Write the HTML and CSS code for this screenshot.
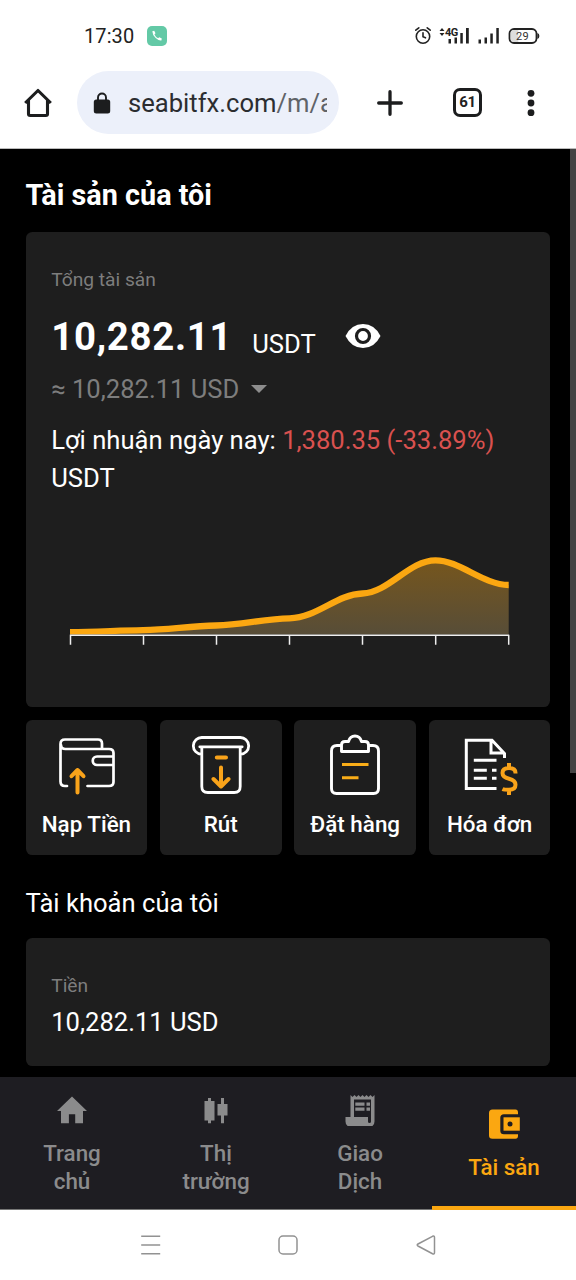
FILE: index.html
```html
<!DOCTYPE html>
<html lang="vi">
<head>
<meta charset="utf-8">
<title>Tài sản của tôi</title>
<link rel="stylesheet" href="styles.css">
</head>
<body>
<div class="screen">
  <header class="chrome">
    <div class="status">
      <span class="clock">17:30</span>
      <svg class="call" width="20" height="20" viewBox="0 0 20 20"><rect width="20" height="20" rx="5" fill="#63c9a6"/><path d="M5.300 5.200l1.900-.5 1.300 2.500-1.100 1.200q1.200 2.500 3.700 3.900l1.200-1.100 2.500 1.200-.4 2.100q-2.400.4-5.700-2.600T5.300 5.200z" fill="#fff"/></svg>
      <svg class="signals" width="128" height="20" viewBox="0 0 128 20">
        <g fill="none" stroke="#222" stroke-width="1.600" stroke-linecap="round"><circle cx="9" cy="10.500" r="6.700"/><path d="M9 6.800v4l2.500 1M1.800 4.200l3-2.400M16.200 4.200l-3-2.400"/></g>
        <g fill="#222"><path d="M25.500 5l2.500-3 2.500 3zM25.500 7l2.500 3 2.500-3z"/><text x="31" y="9.500" class="net">4G</text>
        <path d="M34.500 13h2.500v4.500h-2.500zM40.500 11.500h2.500v6h-2.500zM46.300 7h2.500v10.500h-2.500zM52 2h2.800v15.500H52zM64.500 13.500h2.500v4h-2.500zM70.500 11.500h2.500v6h-2.500zM76.300 7.500h2.500v10h-2.500zM82.300 2h2.500v15.500h-2.500z"/></g>
        <rect x="95.500" y="3" width="27" height="14" rx="4.500" fill="#fff" stroke="#222" stroke-width="1.800"/><path d="M96.800 7q0-3 3-3h4.500v12h-4.500q-3 0-3-3z" fill="#ddd"/><path d="M123.400 7q2 .5 2 3t-2 3z" fill="#222"/><text x="108.500" y="13.800" text-anchor="middle" class="charge">29</text>
      </svg>
    </div>
    <div class="toolbar">
      <svg class="home" width="30" height="30" viewBox="0 0 30 30"><path d="M2.200 15L15 2.500 27.800 15M5.500 12.500v13.300q0 1.700 1.700 1.700h15.600q1.700 0 1.700-1.700V12.500" fill="none" stroke="#1c1d1e" stroke-width="3.100" stroke-linejoin="round"/></svg>
      <div class="address">
        <svg width="18" height="22" viewBox="0 0 18 22"><rect x=".8" y="7.500" width="16.400" height="14" rx="2.500" fill="#1c1d1e"/><path d="M5 9V5.500a4 4 0 0 1 8 0V9" fill="none" stroke="#1c1d1e" stroke-width="1.900"/></svg>
        <span class="url">seabitfx.com<i>/m/a</i></span>
      </div>
      <svg class="plus" width="26" height="26" viewBox="0 0 26 26"><path d="M13 1.700v22.600M1.700 13h22.600" stroke="#1c1d1e" stroke-width="3.300" stroke-linecap="round"/></svg>
      <span class="tabs">61</span>
      <svg class="more" width="8" height="28" viewBox="0 0 8 28" fill="#1c1d1e"><circle cx="4" cy="4.300" r="3.400"/><circle cx="4" cy="14" r="3.400"/><circle cx="4" cy="23.700" r="3.400"/></svg>
    </div>
  </header>

  <main class="page">
    <h1>Tài sản của tôi</h1>
    <section class="card total">
      <div class="label">Tổng tài sản</div>
      <div class="balance">
        <strong>10,282.11</strong><span class="unit">USDT</span>
        <svg class="eye" width="36" height="26" viewBox="0 0 36 26"><path d="M.5 13Q6.500 1 18 1t17.500 12Q29.500 25 18 25T.5 13z" fill="#fff"/><circle cx="18" cy="13" r="6.500" fill="#fff" stroke="#1e1e1e" stroke-width="3.200"/></svg>
      </div>
      <div class="approx"><span>≈ 10,282.11 USD</span><svg width="16" height="8" viewBox="0 0 16 8"><path d="M0 0h16L8 8z" fill="#8d8d8d"/></svg></div>
      <p class="profit">Lợi nhuận ngày nay: <span>1,380.35 (-33.89%)</span> USDT</p>
      <svg class="chart" width="441" height="94" viewBox="69 552 441 94">
        <defs>
          <linearGradient id="area" x1="0" y1="0" x2="0" y2="1"><stop offset="0" stop-color="#76561d"/><stop offset="1" stop-color="#574d38"/></linearGradient>
          <clipPath id="plot"><path d="M70 552h438.700v82.500H70z"/></clipPath>
        </defs>
        <g clip-path="url(#plot)">
          <path d="M70 632.200C96 632 118 630.600 143 630.200C170 629.500 190 626 216 625.500C242 625 264 618.700 289.500 618.300C318 617.500 336 594.500 362.500 593.500C389 592.500 409 560.300 435.500 560.300C460 560.300 482 584.500 509 585V635H70z" fill="url(#area)"/>
          <path d="M70 632.200C96 632 118 630.600 143 630.200C170 629.500 190 626 216 625.500C242 625 264 618.700 289.500 618.300C318 617.500 336 594.500 362.500 593.500C389 592.500 409 560.300 435.500 560.300C460 560.300 482 584.500 509 585" fill="none" stroke="#fba711" stroke-width="6.300"/>
        </g>
        <path d="M69.800 635.300h439.400M70.500 635v9.700M143.500 635v9.700M216.500 635v9.700M289.500 635v9.700M362.500 635v9.700M435.700 635v9.700M508.700 635v9.700" stroke="#eee" stroke-width="1.500"/>
      </svg>
    </section>

    <section class="actions">
      <div class="action">
        <svg width="60" height="62" viewBox="0 0 60 62" fill="none" stroke="#fff" stroke-width="2.700" stroke-linejoin="round" stroke-linecap="round"><path d="M11 52H9q-4.500 0-4.500-4.500V10q0-4.500 4.500-4.500h33q4 0 4 4v5M5 11q0 4 4.500 4H53q4.500 0 4.500 4v29q0 4-4.500 4H31.500M57 22.500H41a4.200 4.200 0 0 0 0 8.500H57"/><path d="M21.500 58.500V36M15.500 42.200l6-6.200 6 6.200" stroke="#f9a31a" stroke-width="4"/></svg>
        <span>Nạp Tiền</span>
      </div>
      <div class="action">
        <svg width="60" height="62" viewBox="0 0 60 62" fill="none" stroke="#fff" stroke-width="2.800" stroke-linejoin="round" stroke-linecap="round"><path d="M10.500 20.300a8.400 8.400 0 0 1 .5-16.800h38a8.400 8.400 0 0 1 .5 16.800M8.800 12.800h42.400M10.800 13v39.500q0 6 6 6h26.400q6 0 6-6V13"/><path d="M25.800 23.500h9.200M30 33.500V52M22.500 45l7.500 7.500 7.500-7.500" stroke="#f9a31a" stroke-width="4"/></svg>
        <span>Rút</span>
      </div>
      <div class="action">
        <svg width="60" height="62" viewBox="0 0 60 62" fill="none" stroke="#fff" stroke-width="2.900" stroke-linejoin="round"><path d="M16 11.500h-4q-5.500 0-5.500 5.500v37.500q0 5 5 5h37q5 0 5-5V17q0-5.500-5.500-5.500h-4M16.500 17.500V11q0-3.500 3.500-3.500h3.500q1.500-5.500 6.500-5.500t6.500 5.500H40q3.500 0 3.500 3.500v6.500z"/><path d="M17 30.500h26.500M17 43.700h16.500" stroke="#f9ad18"/></svg>
        <span>Đặt hàng</span>
      </div>
      <div class="action">
        <svg width="60" height="62" viewBox="2 1.500 60 62" fill="none" stroke="#fff" stroke-width="3"><path d="M38.500 56H8.300V7.700H34l12.500 13.300v4.500M33 8v12.500h13M15.800 27.800h22.700M15.800 37.700h13M34 37.700h4.500M15.800 45.700h13M34 45.700h4.500"/><path d="M57.500 41v-.5q0-5-6.500-5t-6.500 5q0 4.200 6.500 5.700t6.500 6q0 5-6.500 5-5 0-6.500-.7M51 30.500v5M51 56v6.500" stroke="#f9a31a" stroke-width="4"/></svg>
        <span>Hóa đơn</span>
      </div>
    </section>

    <h2>Tài khoản của tôi</h2>
    <section class="card account">
      <div class="label">Tiền</div>
      <div class="amount">10,282.11 USD</div>
    </section>
    <div class="scrollbar"></div>
  </main>

  <nav class="tabbar">
    <a class="tab"><svg width="32" height="32" viewBox="0 0 32 32" fill="#8b8b8c"><path d="M16 2.500L31 17h-4v12.300h-7.800v-9h-6.300v9H5V17H1z"/></svg><span>Trang chủ</span></a>
    <a class="tab"><svg width="32" height="32" viewBox="0 0 32 32" fill="#8b8b8c"><path d="M8 4h3v3h3.500v19.500H11v2.800H8v-2.800H4.500V7H8zM21 4h3v6h3.500v11.500H24v7.800h-3v-7.800h-3.500V10H21z"/></svg><span>Thị trường</span></a>
    <a class="tab"><svg width="32" height="32" viewBox="0 0 32 32"><path d="M6.500 1l2 2 2-2 2 2 2-2 2 2 2-2 2 2 2-2 2 2 2-2 2 2 2-2v26.500q0 5.200-5.200 5.200H6.800q-5.300 0-5.300-5.200V23h5zM10 5.500V23h14v4.500q0 1.500 1.500 1.500t1.500-1.500v-22z" fill="#8b8b8c" fill-rule="evenodd"/><path d="M11.300 8.500h9.200v3.200h-9.200zM22.500 8.500H26v3.200h-3.500zM11.300 13.500h9.200v3.200h-9.200zM22.500 13.500H26v3.200h-3.500z" fill="#8b8b8c"/></svg><span>Giao Dịch</span></a>
    <a class="tab active"><svg width="32" height="32" viewBox="0 0 32 32"><path d="M4.500 1.500h23q2.500 0 2.500 3v1.700H16q-3.700 0-3.700 3.500v13q0 3.500 3.700 3.500h14v1.600q0 3-2.500 3h-23Q1 30.800 1 27.500V5q0-3.500 3.500-3.500z" fill="#fba711"/><path d="M15.500 9.300h16.300v13.400H15.500z" fill="#fba711"/><circle cx="22" cy="16" r="2.500" fill="#1e1d22"/></svg><span>Tài sản</span></a>
  </nav>

  <footer class="system">
    <svg width="20" height="20" viewBox="0 0 20 20"><path d="M.2 1.200h19M.2 9.900h19M.2 18.700h19"/></svg>
    <svg width="20" height="20" viewBox="0 0 20 20"><rect x="1" y="1" width="18" height="18" rx="4"/></svg>
    <svg width="20" height="20" viewBox="0 0 20 20"><path d="M16.500 1.300L2 9q-1.600 1 0 2l14.500 7.700q2 .8 2-1.200v-15q0-2-2-1.200z"/></svg>
  </footer>
</div>
</body>
</html>
```
FILE: styles.css
```css
* { box-sizing: border-box; }
body { margin: 0; font-family: Roboto, "Noto Sans", sans-serif; }
svg { display: block; flex: none; }
.screen { width: 576px; height: 1280px; display: flex; flex-direction: column; background: #000; overflow: hidden; }

.chrome { height: 149px; flex: none; background: #fff; border-bottom: 1px solid #bbb; color: #222; }
.status { height: 71px; display: flex; align-items: center; padding: 0 34px 0 84px; }
.clock { font-size: 20px; letter-spacing: .1px; width: 63px; line-height: 24px; }
.signals { margin-left: auto; }
.net { font: bold 11px Roboto, sans-serif; letter-spacing: -.6px; }
.charge { font: 11px Roboto, sans-serif; letter-spacing: .3px; fill: #333; }
.toolbar { height: 63px; display: flex; align-items: center; }
.home { margin: 0 14px 0 23px; }
.address { width: 262px; height: 63px; margin-left: 10px; padding: 0 12px 0 16px; border-radius: 32px; background: #ecf0fa; display: flex; align-items: center; gap: 17px; }
.url { flex: 1; overflow: hidden; white-space: nowrap; font-size: 25.6px; line-height: 32px; padding-top: 1px; color: #2b2d30; }
.url i { font-style: normal; color: #5f6368; }
.plus { margin-left: 38px; }
.tabs { width: 29px; height: 29px; margin-left: 50px; border: 3px solid #1c1d1e; border-radius: 7px; font-size: 15px; font-weight: 700; line-height: 23px; letter-spacing: -.3px; text-align: center; }
.more { margin-left: 45px; }

.page { position: relative; flex: 1; min-height: 0; overflow: hidden; padding: 0 25.6px; color: #fff; }
h1 { margin: 0; padding-top: 26px; height: 83px; font-size: 28.8px; line-height: 40px; font-weight: 700; }
.card { border-radius: 6.4px; background: #1e1e1e; padding: 0 25.6px; }
.total { height: 475px; padding-top: 33px; }
.label { font-size: 19.2px; line-height: 29px; color: #7d7d7d; }
.balance { display: flex; align-items: flex-start; height: 61px; padding-top: 16px; line-height: 54px; }
.balance strong { font-size: 38.4px; letter-spacing: .7px; }
.unit { font-size: 25.6px; margin: 7px 0 0 20px; }
.eye { margin: 13px 0 0 29px; }
.approx { display: flex; align-items: center; gap: 12px; height: 68px; color: #7d7d7d; font-size: 25.6px; }
.profit { margin: -2px 0 0; font-size: 25.6px; line-height: 38.4px; }
.profit span { color: #d9514f; }
.chart { margin: 54px 0 0 17.4px; }

.actions { display: grid; grid-template-columns: repeat(4, 1fr); gap: 12.8px; margin-top: 13px; }
.action { height: 135px; padding-top: 14px; border-radius: 6.4px; background: #1e1e1e; display: flex; flex-direction: column; align-items: center; font-size: 22.4px; line-height: 30px; font-weight: 500; gap: 13px; white-space: nowrap; }
h2 { margin: 0; padding-top: 30px; height: 83px; font-size: 25.6px; line-height: 36px; font-weight: 400; }
.account { height: 128px; padding-top: 33px; }
.amount { font-size: 25.6px; line-height: 36px; padding-top: 4px; }
.scrollbar { position: absolute; top: 0; right: 0; width: 6px; height: 624px; background: #434343; }

.tabbar { height: 133px; flex: none; display: grid; grid-template-columns: repeat(4, 1fr); background: #1e1d22; color: #8b8b8c; }
.tab { display: flex; flex-direction: column; align-items: center; justify-content: center; gap: 13px; padding-top: 3px; border-bottom: 1px solid #777; font-size: 22.4px; line-height: 28px; font-weight: 500; text-align: center; }
.tab span { max-width: 80px; }
.active { color: #fba711; border-bottom: 4px solid #fba711; padding-top: 5px; }

.system { height: 70px; flex: none; background: #fff; display: flex; justify-content: center; align-items: center; gap: 117.500px; fill: none; stroke: #929292; stroke-width: 1.5; }
```
